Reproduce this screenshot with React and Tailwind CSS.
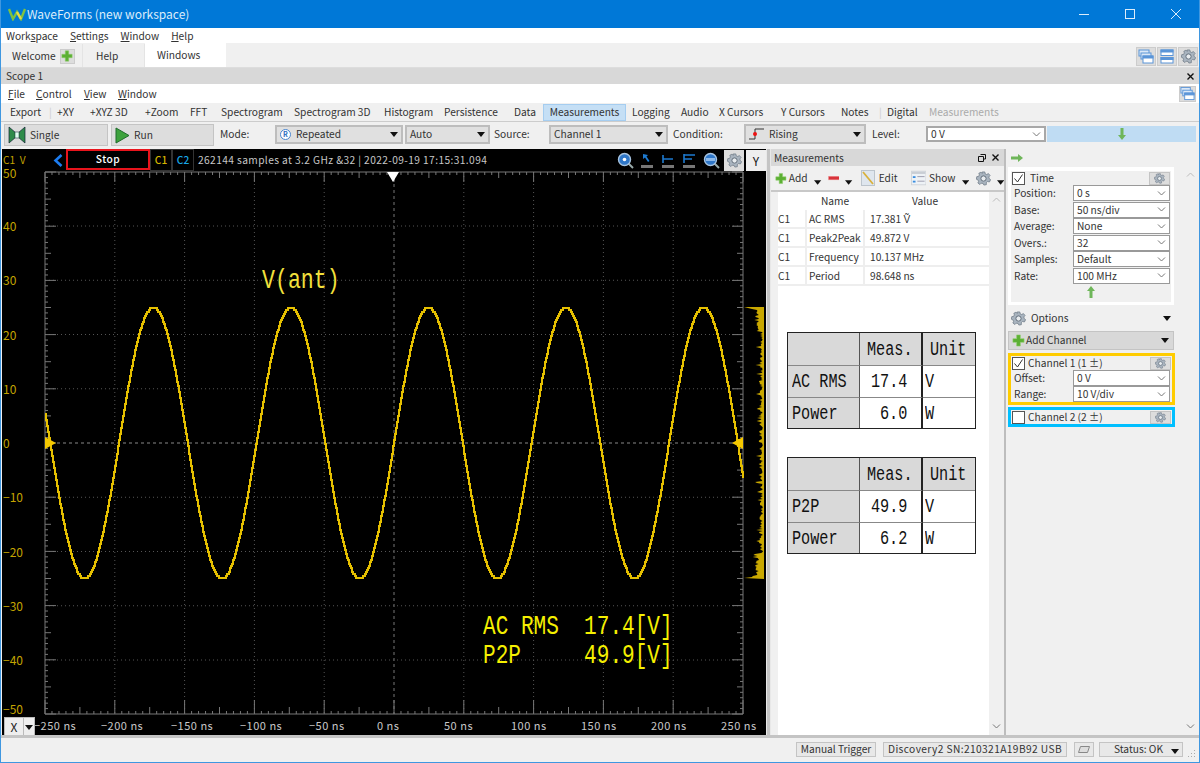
import React from "react";

const Tri = ({ className = "" }) => (
  <svg width="8" height="5" viewBox="0 0 8 5" className={className}><path d="M0 0H8L4 5Z" fill="#111" /></svg>
);
const Chev = () => (
  <svg width="9" height="5" viewBox="0 0 9 5" className="shrink-0"><path d="M1 0.5L4.5 4L8 0.5" fill="none" stroke="#777" strokeWidth="1" /></svg>
);
const Plus = ({ s = 14 }) => (
  <svg width={s} height={s} viewBox="0 0 14 14"><path d="M5 1H9V5H13V9H9V13H5V9H1V5H5Z" fill="#5cb034" stroke="#8fce6c" strokeWidth="0.6" /></svg>
);
const Gear = ({ s = 14 }) => (
  <svg width={s} height={s} viewBox="0 0 16 16">
    <path d="M6.6 1H9.4L9.8 3L11.5 3.8L13.2 2.7L15 4.8L13.7 6.3L14 8L15.6 9.2L14.3 11.7L12.3 11.2L11 12.5L11 14.6L8.4 15L7.5 13.2L5.6 13L4.2 14.4L2 12.8L2.8 11L2 9.4L0.4 8.8L0.8 6L2.8 5.7L3.6 4.2L3 2.4L5.4 1.2L6.6 2.6Z" fill="#a9b4bf" stroke="#6f7b87" strokeWidth="0.8" />
    <circle cx="8" cy="8" r="2.8" fill="#e8ecef" stroke="#5f6b77" strokeWidth="1" />
  </svg>
);
const GreenArrow = ({ dir }) => {
  const rot = dir === "down" ? "rotate(180 6 7)" : dir === "right" ? "rotate(90 6 7)" : "";
  return (
    <svg width="12" height="14" viewBox="0 0 12 14"><path transform={rot} d="M6 1L10 6H7.5V13H4.5V6H2Z" fill="#6fb65a" /></svg>
  );
};
const WinStack = ({ two }) => (
  <svg width="16" height="15" viewBox="0 0 16 15">
    {two ? (
      <g fill="#fff" stroke="#5b95d8"><rect x="2" y="1" width="12" height="5.5" /><rect x="2" y="8.5" width="12" height="5.5" /><rect x="2" y="1" width="12" height="2" fill="#5b95d8" /><rect x="2" y="8.5" width="12" height="2" fill="#5b95d8" /></g>
    ) : (
      <g fill="#dbe8f7" stroke="#5b95d8"><rect x="1" y="1" width="10" height="6" /><rect x="3" y="4" width="10" height="6" /><rect x="5" y="7" width="10" height="7" fill="#fff" /><rect x="5" y="7" width="10" height="2" fill="#5b95d8" /></g>
    )}
  </svg>
);
const Mag = ({ inner }) => (
  <svg width="18" height="18" viewBox="0 0 18 18">
    <path d="M10.5 10.5L16 16" stroke="#9aa" strokeWidth="2" />
    <circle cx="7.5" cy="7.5" r="6" fill="#2f77c8" stroke="#a8c4e0" strokeWidth="1.4" />
    {inner}
  </svg>
);
const Bars = ({ kind }) => (
  <svg width="14" height="16" viewBox="0 0 14 16">
    <rect x="1" y="12" width="12" height="3" fill="#777" />
    {kind === 0 && <path d="M3 1L3 6L5 4.5L8 9L9.5 8L6.5 3.5L8 2Z" fill="#1d7ad0" />}
    {kind === 1 && <path d="M2 2V10M2 6H12" stroke="#1d7ad0" strokeWidth="1.6" fill="none" />}
    {kind === 2 && <path d="M2 1V10M2 2H13M2 6H10" stroke="#1d7ad0" strokeWidth="1.6" fill="none" />}
  </svg>
);

const U = ({ c }) => <span className="underline">{c}</span>;

const toolbar = [
  ["Export", "w-[39px] ml-[9px]"],
  ["|", "w-[8px] text-[#ccc]"],
  ["+XY", "w-[33px]"],
  ["+XYZ 3D", "w-[55px]"],
  ["+Zoom", "w-[45px]"],
  ["FFT", "w-[31px]"],
  ["Spectrogram", "w-[73px]"],
  ["Spectrogram 3D", "w-[90px]"],
  ["Histogram", "w-[60px]"],
  ["Persistence", "w-[70px]"],
  ["Data", "w-[29px]"],
];
const toolbar2 = [
  ["Logging", "w-[49px] ml-[6px]"],
  ["Audio", "w-[38px]"],
  ["X Cursors", "w-[62px]"],
  ["Y Cursors", "w-[60px]"],
  ["Notes", "w-[38px]"],
  ["|", "w-[8px] text-[#ccc]"],
  ["Digital", "w-[42px]"],
];

function Sel({ label, className = "", dark }) {
  return (
    <div className={`flex items-center justify-between ${dark ? "bg-[#e0e0e0] border-2 border-[#bdbdbd]" : "bg-white border-2 border-[#a8a8a8]"} px-[3px] ${className}`}>
      <span className="whitespace-nowrap">{label}</span>
      {dark ? <Tri /> : <Chev />}
    </div>
  );
}

function Row({ label, value }) {
  return (
    <div className="flex items-center h-[16.5px] pl-[3px]">
      <span className="w-[59px]">{label}</span>
      <div className="w-[97px] h-[16px] flex items-center justify-between bg-white border border-[#999] pl-[3px] pr-[3px]">
        <span>{value}</span><Chev />
      </div>
    </div>
  );
}

const Check = ({ on }) => (
  <div className="w-[13px] h-[13px] bg-white border border-[#555] flex items-center justify-center shrink-0">
    {on && <svg width="11" height="11" viewBox="0 0 11 11"><path d="M1.5 5.5L4.5 9L9.5 1.5" fill="none" stroke="#333" strokeWidth="1" /></svg>}
  </div>
);

const GearBtn = () => (
  <div className="w-[21px] h-[13px] bg-[#ddd] border border-[#c4c4c4] flex items-center justify-center"><Gear s={11} /></div>
);

const M = ({ children }) => <span className="inline-block w-0 origin-left scale-x-[0.76] whitespace-pre">{children}</span>;

function MTable({ rows, className = "" }) {
  const head = "bg-[#d9d9d9]";
  return (
    <div className={`w-[189px] h-[97px] grid grid-cols-[72px_63px_minmax(0,1fr)] grid-rows-[32px_32px_31px] border border-[#222] font-['Liberation_Mono',monospace] text-[20px] text-[#111] ${className}`}>
      <div className={`${head} border-r border-[#555]`} />
      <div className={`${head} border-r-2 border-[#222] flex items-center pl-[7px] pt-[1px]`}><M>Meas.</M></div>
      <div className={`${head} flex items-center pl-[7px] pt-[1px]`}><M>Unit</M></div>
      {rows.map((r, i) => (
        <React.Fragment key={i}>
          <div className={`${head} border-t border-[#888] border-r border-r-[#555] flex items-center pl-[4px] pt-[1px]`}><M>{r[0]}</M></div>
          <div className={`border-t border-[#888] border-r-2 border-r-[#222] bg-white flex items-center pt-[1px] ${r[1].length > 3 ? "pl-[11px]" : "pl-[20px]"}`}><M>{r[1]}</M></div>
          <div className="border-t border-[#888] bg-white flex items-center pl-[2px] pt-[1px]"><M>{r[2]}</M></div>
        </React.Fragment>
      ))}
    </div>
  );
}

const measRows = [
  ["C1", "AC RMS", "17.381 Ṽ"],
  ["C1", "Peak2Peak", "49.872 V"],
  ["C1", "Frequency", "10.137 MHz"],
  ["C1", "Period", "98.648 ns"],
];

const OX = 2, OY = 172;
const px = (x) => x - OX;
const py = (y) => y - OY;
const X0 = 45, X1 = 743, Y0 = 443, YU = 5.425, Y_TOP = 172, Y_BOT = 714;
const XU = (X1 - X0) / 500;

function wavePath() {
  let d = "";
  let last = null;
  for (let x = X0; x <= X1; x += 1) {
    const raw = Y0 - 135.5 * Math.cos((2 * Math.PI * (x - 153)) / 137.5);
    const y = Math.round(raw / 2) * 2;
    if (last === null) d += `M${px(x)} ${py(y)}`;
    else {
      d += `H${px(x)}`;
      if (y !== last) d += `V${py(y)}`;
    }
    last = y;
  }
  return d;
}
function histPath() {
  const r = (i) => {
    const v = Math.sin(i * 12.9898) * 43758.5453;
    return v - Math.floor(v);
  };
  let d = `M${px(764)} ${py(307)}L${px(744)} ${py(307)}L${px(752)} ${py(309)}`;
  for (let y = 310; y <= 576; y += 1) {
    const near = Math.min(y - 307, 578 - y);
    const base = near < 25 ? 755 : 759;
    const edge = base + r(y) * 4 - (r(y + 500) > 0.88 ? 4 : 0);
    d += `L${px(edge).toFixed(1)} ${py(y)}`;
  }
  d += `L${px(752)} ${py(577)}L${px(744)} ${py(578)}L${px(764)} ${py(579)}Z`;
  return d;
}

function Chart() {
  const ticks = [];
  for (let i = 0; i <= 100; i++) {
    const x = X0 + i * 6.98;
    const len = i % 10 === 0 ? 14 : i % 5 === 0 ? 7 : 3;
    ticks.push(<path key={"b" + i} d={`M${px(x)} ${py(Y_BOT)}v${-len}`} stroke="#777" />);
    const tl = i % 10 === 0 ? 10 : i % 5 === 0 ? 6 : 3;
    ticks.push(<path key={"t" + i} d={`M${px(x)} ${py(Y_TOP)}v${tl}`} stroke="#777" />);
    const y = Y_TOP + i * 5.42;
    const yl = i % 10 === 0 ? 11 : i % 5 === 0 ? 6 : 3;
    ticks.push(<path key={"l" + i} d={`M${px(X0)} ${py(y)}h${yl}`} stroke="#777" />);
    ticks.push(<path key={"r" + i} d={`M${px(X1)} ${py(y)}h${-yl}`} stroke="#777" />);
  }
  const grid = [];
  for (let v = -200; v <= 200; v += 50) {
    const x = X0 + (v + 250) * XU;
    grid.push(<path key={"gx" + v} d={`M${px(x)} ${py(Y_TOP)}V${py(Y_BOT)}`} stroke={v === 0 ? "#777" : "#555"} strokeDasharray={v === 0 ? "3 3" : "1 3"} />);
  }
  for (let v = -40; v <= 40; v += 10) {
    const y = Y0 - v * YU;
    grid.push(<path key={"gy" + v} d={`M${px(X0)} ${py(y)}H${px(X1)}`} stroke={v === 0 ? "#888" : "#555"} strokeDasharray={v === 0 ? "3 3" : "1 3"} />);
  }
  const yl = [50, 40, 30, 20, 10, 0, -10, -20, -30, -40, -50];
  const xl = [[-250, 34], [-200, 101], [-150, 171], [-100, 240], [-50, 309], [0, 377], [50, 444], [100, 511], [150, 581], [200, 651], [250, 721]];
  const fam = "Noto Sans CJK JP, sans-serif";
  return (
    <svg width="763" height="564" viewBox="0 0 763 564" className="block overflow-visible">
      {grid}
      <path d={`M${px(X0)} ${py(Y_TOP)}H${px(X1)}V${py(Y_BOT)}H${px(X0)}Z`} fill="none" stroke="#777" />
      {ticks}
      <path d={histPath()} fill="#c9a800" />
      <path d={wavePath()} fill="none" stroke="#e6c000" strokeWidth="2" />
      <path d={`M${px(387)} 0H${px(399)}L${px(393)} 10Z`} fill="#fff" />
      <path d={`M${px(45)} ${py(437)}L${px(56)} ${py(443)}L${px(45)} ${py(449)}Z`} fill="#f5c800" />
      <path d={`M${px(743)} ${py(437)}L${px(732)} ${py(443)}L${px(743)} ${py(449)}Z`} fill="#f5c800" />
      {yl.map((v) => (
        <text key={v} x="1" y={py(Y0 - v * YU) + (v === 50 ? 6 : v === -50 ? 0 : 5)} fontSize="12" fill="#c4a400" fontFamily={fam}>
          {v < 0 ? "−" + -v : v}
        </text>
      ))}
      {xl.map(([v, x]) => (
        <text key={v} x={px(x)} y={py(730)} fontSize="11" letterSpacing="0.5" fill="#c8c8c8" fontFamily={fam}>
          {(v < 0 ? "−" + -v : v) + " ns"}
        </text>
      ))}
    </svg>
  );
}

export default function App() {
  return (
    <div className="w-[1200px] h-[763px] overflow-hidden flex flex-col bg-[#f0f0f0] border-x border-b border-[#3f97e0] font-['Noto_Sans_CJK_JP',sans-serif] text-[10.2px] leading-none text-[#333]">
      <div className="h-[28px] shrink-0 bg-[#0078d7] flex items-center pl-[7px] text-white">
        <svg width="18" height="14" viewBox="0 0 18 14"><path d="M1 2L5 12L9 5L13 12L17 2" fill="none" stroke="#7fc241" strokeWidth="2.4" /><path d="M9 5L13 12" stroke="#e8d84a" strokeWidth="2.4" /></svg>
        <span className="ml-[1px] text-[12px] text-[#dcecfa]">WaveForms (new workspace)</span>
        <div className="ml-auto flex items-center">
          <div className="w-[46px] flex justify-center"><div className="w-[10px] h-px bg-[#dcecfa]" /></div>
          <div className="w-[46px] flex justify-center"><div className="w-[10px] h-[10px] border border-[#dcecfa]" /></div>
          <div className="w-[46px] flex justify-center">
            <svg width="10" height="10" viewBox="0 0 10 10"><path d="M0 0L10 10M10 0L0 10" stroke="#dcecfa" /></svg>
          </div>
        </div>
      </div>
      <div className="h-[15px] shrink-0 bg-white flex items-center gap-[12px] pl-[5px] pt-[1px]">
        <span><span>Work</span><U c="s" /><span>pace</span></span>
        <span><U c="S" />ettings</span>
        <span><U c="W" />indow</span>
        <span><U c="H" />elp</span>
      </div>
      <div className="h-[25px] shrink-0 bg-[#f0f0f0] flex items-end pl-[2px] border-b border-[#ddd]">
        <div className="w-[80px] h-[23px] bg-[#f0f0f0] border-r border-[#e4e4e4] flex items-center pl-[9px] gap-[4px] pt-[1px]">
          <span>Welcome</span>
          <div className="w-[15px] h-[15px] bg-[#ddd] border border-[#ccc] flex items-center justify-center"><Plus s={12} /></div>
        </div>
        <div className="w-[60px] h-[23px] ml-[2px] flex items-center pl-[11px] pt-[1px] border-r border-[#e4e4e4]">Help</div>
        <div className="w-[81px] h-[24px] bg-white flex items-center pl-[12px] pt-[1px]">Windows</div>
        <div className="ml-auto flex gap-[1px] pr-[1px] mb-[1px]">
          <div className="w-[20px] h-[19px] bg-[#ddd] border border-[#ccc] flex items-center justify-center"><WinStack /></div>
          <div className="w-[20px] h-[19px] bg-[#ddd] border border-[#ccc] flex items-center justify-center"><WinStack two /></div>
          <div className="w-[20px] h-[19px] bg-[#ddd] border border-[#ccc] flex items-center justify-center"><Gear s={15} /></div>
        </div>
      </div>
      <div className="h-[16px] shrink-0 bg-[#d8d8d8] flex items-center pl-[5px] pr-[5px] pt-[1px] justify-between">
        <span>Scope 1</span>
        <svg width="7" height="7" viewBox="0 0 7 7"><path d="M0.5 0.5L6.5 6.5M6.5 0.5L0.5 6.5" stroke="#111" strokeWidth="1.4" /></svg>
      </div>
      <div className="h-[19px] shrink-0 bg-white flex items-center pl-[7px] pr-[3px]">
        <span className="w-[28px] pt-[2px]"><U c="F" />ile</span>
        <span className="w-[48px] pt-[2px]"><U c="C" />ontrol</span>
        <span className="w-[34px] pt-[2px]"><U c="V" />iew</span>
        <span className="pt-[2px]"><U c="W" />indow</span>
        <div className="ml-auto w-[17px] h-[16px] bg-[#ddd] border border-[#ccc] flex items-center justify-center"><WinStack /></div>
      </div>
      <div className="h-[19px] shrink-0 flex items-center border-b border-[#ccc] whitespace-nowrap pt-[1px]">
        {toolbar.map(([t, c], i) => <span key={i} className={c}>{t}</span>)}
        <span className="w-[83px] h-[17px] bg-[#c5dff5] border border-[#a5cdf0] flex items-center justify-center">Measurements</span>
        {toolbar2.map(([t, c], i) => <span key={i} className={c}>{t}</span>)}
        <span className="text-[#aaa]">Measurements</span>
      </div>
      <div className="h-[26px] shrink-0 flex items-center pl-[3px] whitespace-nowrap">
        <div className="w-[104px] h-[22px] bg-[#ddd] border border-[#c4c4c4] flex items-center pl-[3px] gap-[4px]">
          <svg width="18" height="18" viewBox="0 0 18 18"><path d="M1 1L8 7V11L1 17Z" fill="#2e8b4a" stroke="#123" strokeWidth="0.7" /><path d="M17 1L10 7V11L17 17Z" fill="#2e8b4a" stroke="#123" strokeWidth="0.7" /><rect x="7" y="6" width="4" height="6" fill="#dfe" stroke="#123" strokeWidth="0.5" /></svg>
          <span>Single</span>
        </div>
        <div className="w-[103px] h-[22px] ml-[3px] bg-[#ddd] border border-[#c4c4c4] flex items-center pl-[3px] gap-[4px]">
          <svg width="15" height="17" viewBox="0 0 15 17"><path d="M1 1L14 8.5L1 16Z" fill="#3da23d" stroke="#1f6b2c" /></svg>
          <span>Run</span>
        </div>
        <span className="w-[55px] ml-[6px] mb-[2px]">Mode:</span>
        <div className="w-[128px] h-[19px] mb-[2px] bg-[#e0e0e0] border-2 border-[#bdbdbd] flex items-center justify-between px-[3px]">
          <span className="flex items-center gap-[5px]">
            <span className="w-[11px] h-[11px] rounded-full border border-[#4a86d0] bg-white flex items-center justify-center text-[7px] text-[#2a6cc0] font-bold">R</span>
            Repeated
          </span>
          <Tri />
        </div>
        <Sel dark label="Auto" className="w-[85px] h-[19px] ml-[2px] mb-[2px]" />
        <span className="w-[54px] ml-[4px] mb-[2px]">Source:</span>
        <Sel dark label="Channel 1" className="w-[119px] h-[19px] ml-[1px] mb-[2px]" />
        <span className="w-[71px] ml-[5px] mb-[2px]">Condition:</span>
        <div className="w-[122px] h-[20px] mb-[2px] bg-[#e0e0e0] border-2 border-[#bdbdbd] flex items-center justify-between px-[3px]">
          <span className="flex items-center gap-[4px]">
            <svg width="16" height="14" viewBox="0 0 16 14"><path d="M0 12H6V2H15" fill="none" stroke="#333" /><circle cx="6" cy="7" r="2" fill="#e11" /></svg>
            Rising
          </span>
          <Tri />
        </div>
        <span className="w-[54px] ml-[6px] mb-[2px]">Level:</span>
        <Sel label="0 V" className="w-[120px] h-[16px] mb-[2px]" />
        <div className="w-[149px] h-[16px] mb-[2px] ml-[1px] bg-[#bfdcf3] flex items-center justify-center"><GreenArrow dir="down" /></div>
      </div>
      <div className="h-[589px] shrink-0 flex mt-[1px] border-b-[3px] border-[#c4c4c4]">
        <div className="w-[764px] ml-[1px] bg-black relative shrink-0 flex flex-col overflow-hidden">
          <div className="h-[23px] shrink-0 flex items-center pl-[1px] text-[#c4a400] whitespace-nowrap">
            <span className="w-[50px]">C1&nbsp;&nbsp;V</span>
            <svg width="11" height="13" viewBox="0 0 11 13"><path d="M8.5 1L2.5 6.5L8.5 12" fill="none" stroke="#1c7cf0" strokeWidth="2.6" /></svg>
            <div className="w-[84px] h-[21px] ml-[2px] mt-[-2px] border-2 border-[#e8141c] flex items-center justify-center text-white font-medium tracking-[0.5px]">Stop</div>
            <div className="w-[22px] h-[22px] mt-[-1px] border border-[#333] flex items-center justify-center text-[#d4b400] font-medium">C1</div>
            <div className="w-[22px] h-[22px] mt-[-1px] border border-[#333] flex items-center justify-center text-[#18a8e8] font-medium">C2</div>
            <span className="ml-[4px] text-[#c8c8c8] tracking-[0.4px]">262144 samples at 3.2 GHz &amp;32 | 2022-09-19 17:15:31.094</span>
            <div className="ml-auto flex items-center">
              <div className="w-[21px] flex justify-center"><Mag inner={<circle cx="7.5" cy="7.5" r="1.8" fill="#fff" />} /></div>
              <div className="w-[21px] flex justify-center"><Bars kind={0} /></div>
              <div className="w-[21px] flex justify-center"><Bars kind={1} /></div>
              <div className="w-[21px] flex justify-center"><Bars kind={2} /></div>
              <div className="w-[25px] flex justify-center"><Mag inner={<path d="M3 6H12V9H3Z" fill="#8cb8e8" />} /></div>
              <div className="w-[20px] h-[21px] bg-[#ddd] flex items-center justify-center"><Gear s={15} /></div>
              <div className="w-[20px] h-[21px] ml-[2px] bg-[#eee] flex items-center justify-center text-[#111] text-[12px]">Y</div>
            </div>
          </div>
          <Chart />
          <div className="absolute left-[2px] top-[568px] w-[31px] h-[20px] bg-[#eee] border border-[#bbb] flex items-center text-[#222] text-[12px]">
            <span className="w-[19px] text-center border-r border-[#bbb] h-full flex items-center justify-center">X</span>
            <span className="flex-1 flex justify-center"><Tri /></span>
          </div>
          <div className="absolute left-[260px] top-[118px] origin-left scale-x-[0.77] font-['Liberation_Mono',monospace] text-[28px] text-[#f2e03c] whitespace-pre">V(ant)</div>
          <div className="absolute left-[481px] top-[464px] origin-left scale-x-[0.78] font-['Liberation_Mono',monospace] text-[27px] leading-[29px] text-[#f5f000] whitespace-pre">
            {"AC RMS  17.4[V]\nP2P     49.9[V]"}
          </div>
        </div>
        <div className="w-[5px] shrink-0 bg-[#c4c4c4] border-x border-[#e8e8e8]" />
        <div className="w-[235px] shrink-0 flex flex-col border-r-2 border-[#bdbdbd]">
          <div className="h-[17px] shrink-0 bg-[#d8d8d8] flex items-center pl-[3px] pr-[5px]">
            <span className="pt-[1px]">Measurements</span>
            <div className="ml-auto flex items-center gap-[6px]">
              <svg width="8" height="8" viewBox="0 0 8 8"><path d="M2.5 0.5H7.5V5H5.5M0.5 2.5H5.5V7.5H0.5Z" fill="none" stroke="#111" /></svg>
              <svg width="7" height="7" viewBox="0 0 7 7"><path d="M0.5 0.5L6.5 6.5M6.5 0.5L0.5 6.5" stroke="#111" strokeWidth="1.4" /></svg>
            </div>
          </div>
          <div className="h-[26px] shrink-0 flex items-center pl-[4px] border-b-2 border-[#c8c8c8]">
            <Plus s={13} />
            <span className="ml-[2px] w-[25px] pt-[1px]">Add</span>
            <Tri className="mt-[9px] ml-[3px]" />
            <svg className="ml-[6px]" width="13" height="7" viewBox="0 0 13 7"><rect x="0.5" y="1" width="12" height="4" fill="#d8333b" stroke="#f0a0a0" strokeWidth="0.5" /></svg>
            <Tri className="mt-[9px] ml-[6px]" />
            <div className="ml-[8px] w-[14px] h-[16px] bg-[#dfe6ee] border border-[#bcc4cc] flex items-center justify-center">
              <svg width="12" height="14" viewBox="0 0 12 14"><path d="M1 1L11 13" stroke="#d9b13a" strokeWidth="1.8" /></svg>
            </div>
            <span className="ml-[4px] pt-[1px]">Edit</span>
            <svg className="ml-[13px]" width="17" height="16" viewBox="0 0 17 16"><rect x="0.5" y="0.5" width="16" height="15" fill="#eef2f6" stroke="#d0d4d8" /><rect x="1" y="1" width="15" height="2.5" fill="#c9ced4" /><rect x="2" y="6" width="3" height="2" fill="#3a8ee0" /><rect x="2" y="11" width="3" height="2" fill="#3a8ee0" /><rect x="7" y="6" width="8" height="1" fill="#99a" /><rect x="7" y="11" width="8" height="1" fill="#99a" /></svg>
            <span className="ml-[3px] pt-[1px]">Show</span>
            <Tri className="mt-[9px] ml-[6px]" />
            <div className="ml-[7px]"><Gear s={15} /></div>
            <Tri className="mt-[9px] ml-[6px]" />
          </div>
          <div className="flex-1 flex min-h-0">
            <div className="w-[7px] shrink-0" />
            <div className="w-[211px] shrink-0 bg-white flex flex-col">
              <div className="h-[18px] shrink-0 flex items-center pt-[1px]">
                <span className="w-[29px]" />
                <span className="w-[56px] text-center">Name</span>
                <span className="w-[124px] text-center">Value</span>
              </div>
              {measRows.map((r) => (
                <div key={r[1]} className="h-[19px] shrink-0 flex items-center border-b-2 border-[#eee]">
                  <span className="w-[29px] h-full flex items-center pt-[1px] border-r-2 border-[#eee]">{r[0]}</span>
                  <span className="w-[58px] h-full flex items-center pl-[2px] pt-[1px] border-r-2 border-[#eee] whitespace-nowrap">{r[1]}</span>
                  <span className="pl-[5px] pt-[1px] whitespace-nowrap">{r[2]}</span>
                </div>
              ))}
              <MTable className="ml-[9px] mt-[46px]" rows={[["AC RMS", "17.4", "V"], ["Power", "6.0", "W"]]} />
              <MTable className="ml-[9px] mt-[28px]" rows={[["P2P", "49.9", "V"], ["Power", "6.2", "W"]]} />
            </div>
            <div className="flex-1 flex flex-col items-center justify-between pt-[5px] pb-[6px]">
              <svg className="rotate-180" width="9" height="5" viewBox="0 0 9 5"><path d="M1 0.5L4.5 4L8 0.5" fill="none" stroke="#bbb" /></svg>
              <Chev />
            </div>
          </div>
        </div>
        <div className="flex-1 flex flex-col relative pl-[2px]">
          <div className="h-[18px] shrink-0 flex items-center pl-[3px]"><GreenArrow dir="right" /></div>
          <div className="flex flex-1 min-h-0">
            <div className="w-[167px] shrink-0 flex flex-col">
              <div className="w-[166px] h-[138px] shrink-0 border-[3px] border-white border-t-4 flex flex-col">
                <div className="h-[14px] shrink-0 flex items-center justify-between pr-[1px] pl-[1px]">
                  <span className="flex items-center gap-[5px]"><Check on /><span>Time</span></span>
                  <GearBtn />
                </div>
                <div>
                  <Row label="Position:" value="0 s" />
                  <Row label="Base:" value="50 ns/div" />
                  <Row label="Average:" value="None" />
                  <Row label="Overs.:" value="32" />
                  <Row label="Samples:" value="Default" />
                  <Row label="Rate:" value="100 MHz" />
                </div>
                <div className="flex justify-center mt-[1px] w-[160px]"><GreenArrow dir="up" /></div>
              </div>
              <div className="h-[25px] shrink-0 mt-[1px] flex items-center pl-[3px] pr-[4px]">
                <Gear s={15} /><span className="ml-[5px]">Options</span><Tri className="ml-auto" />
              </div>
              <div className="w-[166px] h-[19px] shrink-0 bg-[#d8d8d8] border border-[#c4c4c4] flex items-center pl-[3px] pr-[4px]">
                <Plus s={13} /><span className="ml-[1px]">Add Channel</span><Tri className="ml-auto" />
              </div>
              <div className="w-[167px] h-[52px] shrink-0 mt-[3px] border-[3px] border-[#ffcc00] flex flex-col">
                <div className="h-[14px] shrink-0 flex items-center justify-between pl-[1px] pr-[1px]">
                  <span className="flex items-center gap-[3px]"><Check on /><span>Channel 1 (1 ±)</span></span>
                  <GearBtn />
                </div>
                <Row label="Offset:" value="0 V" />
                <Row label="Range:" value="10 V/div" />
              </div>
              <div className="w-[167px] h-[20px] shrink-0 mt-[2px] border-[3px] border-[#00bfff] flex items-center justify-between pl-[1px] pr-[1px]">
                <span className="flex items-center gap-[3px]"><Check /><span>Channel 2 (2 ±)</span></span>
                <GearBtn />
              </div>
            </div>
            <div className="w-[18px] ml-[6px] shrink-0 flex flex-col items-center justify-between pb-[6px] pt-[5px]">
              <svg className="rotate-180" width="9" height="5" viewBox="0 0 9 5"><path d="M1 0.5L4.5 4L8 0.5" fill="none" stroke="#bbb" /></svg>
              <Chev />
            </div>
          </div>
        </div>
      </div>
      <div className="flex-1 flex items-center justify-end pr-[3px] pb-[1px] whitespace-nowrap">
        <div className="w-[80px] h-[15px] bg-[#e8e8e8] border border-[#c4c4c4] flex items-center justify-center">Manual Trigger</div>
        <div className="w-[184px] h-[15px] ml-[7px] bg-[#e8e8e8] border border-[#c4c4c4] flex items-center justify-center tracking-[0.4px]">Discovery2 SN:210321A19B92 USB</div>
        <div className="w-[20px] h-[15px] ml-[7px] bg-[#e8e8e8] border border-[#c4c4c4] flex items-center justify-center">
          <svg width="12" height="7" viewBox="0 0 12 7"><path d="M2.5 0.5H11.5L9.5 6.5H0.5Z" fill="#ddd" stroke="#888" /></svg>
        </div>
        <div className="w-[84px] h-[15px] ml-[5px] bg-[#e8e8e8] border border-[#c4c4c4] flex items-center justify-end pr-[3px] gap-[8px]">
          <span>Status: OK</span><Tri className="mt-[4px]" />
        </div>
        <svg className="ml-[5px] mt-[6px]" width="8" height="8" viewBox="0 0 8 8"><path d="M6 1h1v1H6zM3 4h1v1H3zM6 4h1v1H6zM0 7h1v1H0zM3 7h1v1H3zM6 7h1v1H6z" fill="#aaa" /></svg>
      </div>
    </div>
  );
}
